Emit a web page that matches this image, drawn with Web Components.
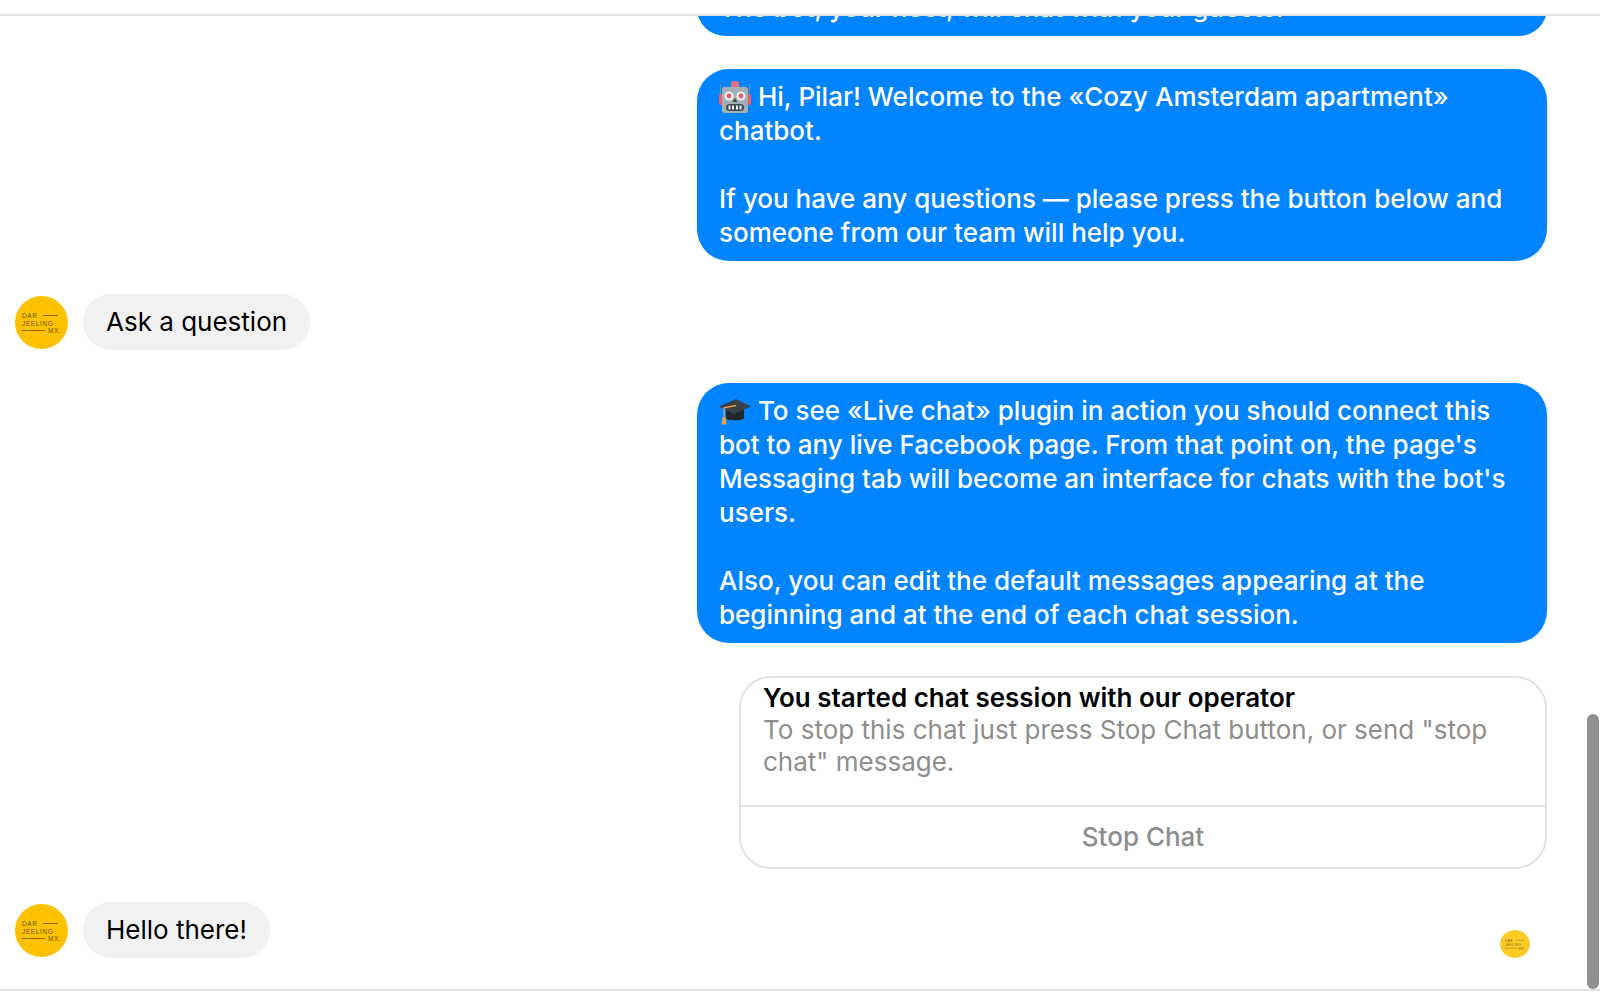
<!doctype html>
<html>
<head>
<meta charset="utf-8">
<title>Chat</title>
<style>
    html, body { margin: 0; height: 100%; background: #fff; overflow: hidden; }
    body { font-family: Inter, "Liberation Sans", sans-serif; }
</style>
</head>
<body>
<chat-window>
    <bot-bubble>The bot, your host, will chat with your guests.</bot-bubble>
    <bot-bubble><robot-emoji></robot-emoji> Hi, Pilar! Welcome to the «Cozy Amsterdam apartment» chatbot.<br><br>If you have any questions — please press the button below and someone from our team will help you.</bot-bubble>
    <user-message>Ask a question</user-message>
    <bot-bubble><cap-emoji></cap-emoji> To see «Live chat» plugin in action you should connect this bot to any live Facebook page. From that point on, the page's Messaging tab will become an interface for chats with the bot's users.<br><br>Also, you can edit the default messages appearing at the beginning and at the end of each chat session.</bot-bubble>
    <session-card heading="You started chat session with our operator" action="Stop Chat">To stop this chat just press Stop Chat button, or send "stop chat" message.</session-card>
    <user-message seen>Hello there!</user-message>
</chat-window>

<script>
/**
 * Round yellow logo, drawn from real text so it stays text.
 */
class BrandAvatar extends HTMLElement {
    constructor() {
        super();
        this.attachShadow({ mode: 'open' });
        this.shadowRoot.innerHTML = `
<style>
    :host {
        display: block;
        flex: none;
        width: 53px;
        height: 53px;
        border-radius: 50%;
        background: #ffc200;
    }
    svg { display: block; width: 100%; height: 100%; }
    text {
        font-family: "Liberation Sans", sans-serif;
        font-size: 6.4px;
        letter-spacing: .7px;
        fill: #6b5200;
    }
    line { stroke: #6b5200; stroke-width: .8; }
</style>
<svg viewBox="0 0 53 53">
    <text x="7" y="22">DAR</text>
    <line x1="28" y1="19.5" x2="43" y2="19.5"/>
    <text x="7" y="29.5">JEELING</text>
    <line x1="7" y1="34.5" x2="30" y2="34.5"/>
    <text x="33" y="37">MX.</text>
</svg>`;
    }
}
customElements.define('brand-avatar', BrandAvatar);

class RobotEmoji extends HTMLElement {
    constructor() {
        super();
        this.attachShadow({ mode: 'open' });
        this.shadowRoot.innerHTML = `
<style>
    :host { display: inline-block; width: 32px; height: 32px; vertical-align: -7px; }
    svg { display: block; width: 100%; height: 100%; }
</style>
<svg viewBox="0 0 32 32">
    <path d="M1.5 3v21M30.5 3v21" stroke="#7d8a92" stroke-width="1"/>
    <rect x="0" y="13" width="5" height="11" rx="1.5" fill="#ef5a6a"/>
    <rect x="27" y="13" width="5" height="11" rx="1.5" fill="#ef5a6a"/>
    <rect x="12" y="0" width="8" height="8" rx="3" fill="#f0707c"/>
    <rect x="3" y="6" width="26" height="26" rx="2.5" fill="#a3b0b8"/>
    <circle cx="10" cy="15" r="4.6" fill="#e8eef0"/>
    <circle cx="22" cy="15" r="4.6" fill="#e8eef0"/>
    <circle cx="10" cy="15" r="2.4" fill="#e85a6c"/>
    <circle cx="22" cy="15" r="2.4" fill="#e85a6c"/>
    <path d="M16 17l2.4 4h-4.800z" fill="#3b4348"/>
    <rect x="7" y="23" width="18" height="7" rx="3.500" fill="#3f4a50"/>
    <path d="M10.500 24.500v4M14 24.500v4M18 24.500v4M21.500 24.500v4" stroke="#e8eef0" stroke-width="2"/>
</svg>`;
    }
}
customElements.define('robot-emoji', RobotEmoji);

class CapEmoji extends HTMLElement {
    constructor() {
        super();
        this.attachShadow({ mode: 'open' });
        this.shadowRoot.innerHTML = `
<style>
    :host { display: inline-block; width: 32px; height: 32px; vertical-align: -7px; }
    svg { display: block; width: 100%; height: 100%; }
</style>
<svg viewBox="0 0 32 32">
    <path d="M7 14v9c0 3 18 3 18 0v-9z" fill="#22272e"/>
    <path d="M0 11.500L17 4l15 7.500L15 19z" fill="#39414b"/>
    <path d="M17 10.500L5 12.800v9" fill="none" stroke="#e8a33c" stroke-width="1.300"/>
    <path d="M3.500 22h3l1 7.500h-5z" fill="#e8a33c"/>
</svg>`;
    }
}
customElements.define('cap-emoji', CapEmoji);

/**
 * Blue message sent by the bot.
 */
const bubbleTemplate = document.createElement('template');
bubbleTemplate.innerHTML = `
<style>
    :host {
        display: block;
        flex: none;
        box-sizing: border-box;
        width: 850px;
        margin-left: auto;
        padding: 11px 22px 11px 22px;
        border-radius: 32px;
        background: #0084ff;
        color: #fff;
        font-size: 26px;
        font-weight: 500;
        line-height: 34px;
    }
</style>
<slot></slot>
`;
class BotBubble extends HTMLElement {
    constructor() {
        super();
        this.attachShadow({ mode: 'open' });
        this.shadowRoot.appendChild(bubbleTemplate.content.cloneNode(true));
    }
}
customElements.define('bot-bubble', BotBubble);

/**
 * Grey message from the user, with the avatar on its left.
 */
const userTemplate = document.createElement('template');
userTemplate.innerHTML = `
<style>
    :host {
        display: flex;
        flex: none;
        align-items: center;
        gap: 15px;
        color: #000;
        font-size: 26px;
    }
    .pill {
        padding: 11px 23px;
        border-radius: 28px;
        background: #f1f1f1;
        line-height: 34px;
    }
    .seen {
        display: none;
        width: 30px;
        height: 28px;
        margin-left: auto;
        margin-right: 17px;
        align-self: flex-end;
        overflow: hidden;
        border-radius: 50%;
        opacity: .85;
    }
    :host([seen]) .seen { display: block; }
    .seen brand-avatar { width: 30px; height: 28px; }
</style>
<brand-avatar></brand-avatar>
<div class="pill"><slot></slot></div>
<div class="seen"><brand-avatar></brand-avatar></div>
`;
class UserMessage extends HTMLElement {
    constructor() {
        super();
        this.attachShadow({ mode: 'open' });
        this.shadowRoot.appendChild(userTemplate.content.cloneNode(true));
    }
}
customElements.define('user-message', UserMessage);

/**
 * Outlined card with a title, some text and one button.
 */
const cardTemplate = document.createElement('template');
cardTemplate.innerHTML = `
<style>
    :host {
        display: block;
        flex: none;
        box-sizing: border-box;
        width: 808px;
        margin-left: auto;
        border: 2px solid #e2e2e2;
        border-radius: 32px;
        font-size: 26px;
        line-height: 32px;
    }
    .body { padding: 4px 22px 27px 22px; border-bottom: 2px solid #e2e2e2; }
    .title { color: #000; font-weight: 600; }
    .text { color: #8e8e8e; }
    .action { padding: 14px 0 14px; color: #8e8e8e; text-align: center; font-weight: 500; }
</style>
<div class="body">
    <div class="title"></div>
    <div class="text"><slot></slot></div>
</div>
<div class="action"></div>
`;
class SessionCard extends HTMLElement {
    constructor() {
        super();
        this.attachShadow({ mode: 'open' });
        this.shadowRoot.appendChild(cardTemplate.content.cloneNode(true));
    }
    connectedCallback() {
        this.shadowRoot.querySelector('.title').textContent = this.getAttribute('heading');
        this.shadowRoot.querySelector('.action').textContent = this.getAttribute('action');
    }
}
customElements.define('session-card', SessionCard);

/**
 * Frame of the chat: messages stick to the bottom and run off the top.
 */
const windowTemplate = document.createElement('template');
windowTemplate.innerHTML = `
<style>
    :host {
        display: block;
        box-sizing: border-box;
        position: relative;
        height: 997px;
        padding: 14px 0 6px;
    }
    .frame {
        height: 100%;
        box-sizing: border-box;
        border-top: 2px solid #e0e0e0;
        border-bottom: 2px solid #e0e0e0;
        overflow: hidden;
    }
    .list {
        height: 100%;
        box-sizing: border-box;
        display: flex;
        flex-direction: column;
        justify-content: flex-end;
        gap: 33px;
        padding: 0 53px 31px 15px;
    }
    .thumb {
        position: absolute;
        right: 1px;
        top: 714px;
        width: 12px;
        height: 275px;
        border-radius: 6px;
        background: #8f8f8f;
    }
</style>
<div class="frame"><div class="list"><slot></slot></div></div>
<div class="thumb"></div>
`;
class ChatWindow extends HTMLElement {
    constructor() {
        super();
        this.attachShadow({ mode: 'open' });
        this.shadowRoot.appendChild(windowTemplate.content.cloneNode(true));
    }
}
customElements.define('chat-window', ChatWindow);
</script>
</body>
</html>
